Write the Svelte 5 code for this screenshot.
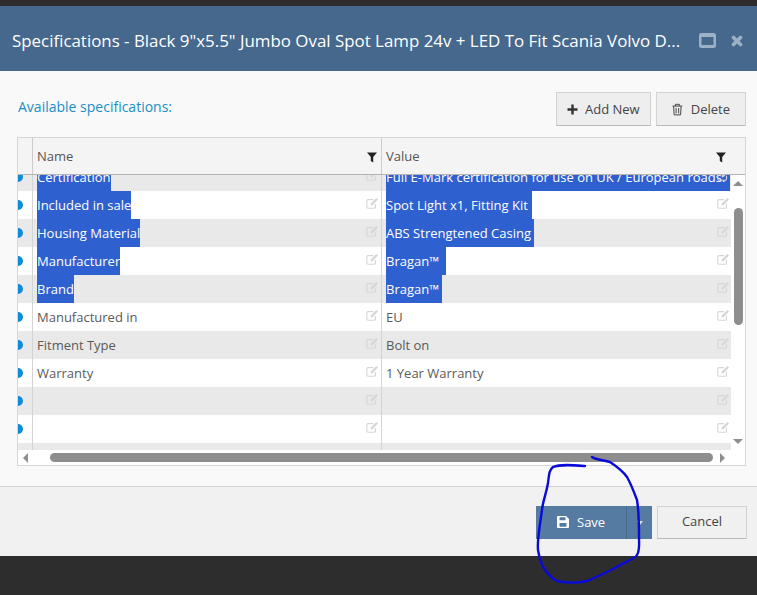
<script>
  const rows = [
    { name: 'Certification', value: 'Full E-Mark certification for use on UK / European roads.', sel: true, pad: 5 },
    { name: 'Included in sale', value: 'Spot Light x1, Fitting Kit', sel: true, pad: 4 },
    { name: 'Housing Material', value: 'ABS Strengtened Casing', sel: true, pad: 3 },
    { name: 'Manufacturer', value: 'Bragan™', sel: true, pad: 7 },
    { name: 'Brand', value: 'Bragan™', sel: true, pad: 3 },
    { name: 'Manufactured in', value: 'EU' },
    { name: 'Fitment Type', value: 'Bolt on' },
    { name: 'Warranty', value: '1 Year Warranty' },
    { name: '', value: '' },
    { name: '', value: '' },
    { name: '', value: '' }
  ];
</script>

{#snippet edit()}
  <svg class="edit" viewBox="0 0 13 12" width="13" height="12" aria-hidden="true">
    <path d="M9.5 6.8V10a1.2 1.2 0 0 1-1.2 1.2H2A1.2 1.2 0 0 1 .8 10V3.8A1.2 1.2 0 0 1 2 2.6h5.2" fill="none" stroke="currentColor" stroke-width="1.1"/>
    <path d="M5 6.2 10.4.9l1.6 1.6-5.3 5.4-2.1.5z" fill="currentColor"/>
  </svg>
{/snippet}

<div class="page">
  <div class="window">
    <header class="titlebar">
      <div class="title">Specifications - Black 9"x5.5" Jumbo Oval Spot Lamp 24v + LED To Fit Scania Volvo D...</div>
      <svg class="maximize" viewBox="0 0 17 15" width="17" height="15" aria-hidden="true">
        <rect x="0" y="0" width="17" height="15" rx="2.5" fill="#9db1c6"/>
        <rect x="2.5" y="4" width="12" height="8" fill="#46688c"/>
      </svg>
      <svg class="close" viewBox="0 0 12 12" width="12" height="12" aria-hidden="true">
        <path d="M2.5 2.5l7 7M9.5 2.5l-7 7" stroke="#9db1c6" stroke-width="3.6" stroke-linecap="round"/>
      </svg>
    </header>

    <main class="content">
      <div class="toolbar">
        <span class="label">Available specifications:</span>
        <div class="actions">
          <button class="btn add">
            <svg viewBox="0 0 11 11" width="11" height="11" aria-hidden="true"><path d="M5.5.5v10M.5 5.5h10" stroke="#333" stroke-width="2.4"/></svg>
            Add New
          </button>
          <button class="btn del">
            <svg viewBox="0 0 11 13" width="11" height="13" aria-hidden="true"><path d="M.5 3h10M3.5 3V1.2h4V3M1.7 3l.5 9h6.6l.5-9M4.2 5v5.5M6.8 5v5.5" fill="none" stroke="#444" stroke-width="1"/></svg>
            Delete
          </button>
        </div>
      </div>

      <div class="grid">
        <div class="grid-head">
          <div class="hc sel"></div>
          <div class="hc name">Name
            <svg class="filter" viewBox="0 0 10 11" width="10" height="11" aria-hidden="true"><path d="M0 .5h10L6.2 5v5.5L3.8 9V5z" fill="#222"/></svg>
          </div>
          <div class="hc value">Value
            <svg class="filter" viewBox="0 0 10 11" width="10" height="11" aria-hidden="true"><path d="M0 .5h10L6.2 5v5.5L3.8 9V5z" fill="#222"/></svg>
          </div>
          <div class="hc end"></div>
        </div>

        <div class="grid-mid">
          <div class="viewport">
            <div class="rows">
              {#each rows as r, i}
                <div class="row" class:alt={i % 2 === 0}>
                  <div class="c-sel"><span class="dot"></span></div>
                  <div class="c c-name">
                    <span class="txt" class:selected={r.sel}>{r.name}</span>
                    {@render edit()}
                  </div>
                  <div class="c c-value">
                    <span class="txt" class:selected={r.sel} style:padding-right={r.pad ? `${r.pad}px` : null}>{r.value}</span>
                    {@render edit()}
                  </div>
                </div>
              {/each}
            </div>
          </div>
          <div class="vscroll">
            <span class="arrow up"></span>
            <div class="vtrack"><div class="vthumb"></div></div>
            <span class="arrow down"></span>
          </div>
        </div>

        <div class="hscroll">
          <span class="arrow left"></span>
          <div class="htrack"><div class="hthumb"></div></div>
          <span class="arrow right"></span>
        </div>
      </div>
    </main>

    <footer class="footer">
      <div class="split">
        <button class="save">
          <svg viewBox="0 0 12 12" width="12" height="12" aria-hidden="true">
            <path fill-rule="evenodd" d="M1 0h8l3 3v8a1 1 0 0 1-1 1H1a1 1 0 0 1-1-1V1a1 1 0 0 1 1-1zm1.5 1.3v3h6v-3zM2.5 7v3.7h7V7z" fill="#fff"/>
          </svg>
          Save
        </button>
        <button class="caret" aria-label="More"><span></span></button>
      </div>
      <button class="btn cancel">Cancel</button>
    </footer>
  </div>

  <svg class="scribble" viewBox="0 0 757 595" width="757" height="595" aria-hidden="true">
    <path d="M585 466C572 465 560 464 553 467C549 470 549 475 548 483C546 495 543 500 542 510C540 525 537 540 538 550C539 558 541 562 543 567C547 573 551 578 557 581C566 583 578 583 587 581C597 577 607 572 617 567C624 562 634 560 637 555C640 550 639 545 639 537C639 525 639 512 637 500C634 492 631 484 627 477C622 470 616 466 610 462C604 460 596 460 592 457" fill="none" stroke="#0a0ad8" stroke-width="2.4" stroke-linecap="round" stroke-linejoin="round"/>
  </svg>
</div>

<style>
  :global(body) { margin: 0; }
  .page {
    position: relative;
    width: 757px;
    height: 595px;
    overflow: hidden;
    background: #2d2d2d;
    padding-top: 6px;
    box-sizing: border-box;
    font-family: "Open Sans", "Liberation Sans", sans-serif;
    font-size: 13px;
    color: #5a5a5a;
  }
  .window { display: flex; flex-direction: column; height: 550px; }
  .titlebar {
    height: 65px;
    flex: none;
    display: flex;
    align-items: center;
    background: #46688c;
    color: #fff;
    padding: 4px 0 0 12px;
    box-sizing: border-box;
  }
  .title { width: 687px; font-size: 16.9px; white-space: nowrap; flex: none; }
  .maximize { margin-right: 15px; flex: none; }
  .close { flex: none; }
  .content {
    flex: 1;
    background: #f9f9f9;
    padding: 21px 11px 0 17px;
    box-sizing: border-box;
    border-bottom: 1px solid #d4d4d4;
  }
  .toolbar {
    display: flex;
    justify-content: space-between;
    height: 45px;
    align-items: flex-start;
  }
  .label { color: #1b8fc4; font-size: 14px; line-height: 20px; margin: 5px 0 0 1px; }
  .actions { display: flex; gap: 5px; }
  .btn {
    height: 34px;
    box-sizing: border-box;
    border: 1px solid #d2d2d2;
    border-bottom-color: #bbb;
    background: #eeeeee;
    font: inherit;
    color: #444;
    display: flex;
    align-items: center;
    gap: 7px;
    padding: 0 10px;
    white-space: nowrap;
  }
  .btn.add { width: 95px; }
  .btn.del { width: 90px; padding: 0 15px; gap: 8px; }
  .grid {
    width: 729px;
    height: 329px;
    box-sizing: border-box;
    border: 1px solid #d6d6d6;
    background: #fff;
    display: flex;
    flex-direction: column;
  }
  .grid-head {
    height: 37px;
    flex: none;
    display: flex;
    background: #f4f4f4;
    border-bottom: 1px solid #b4b4b4;
    box-sizing: border-box;
    color: #555;
  }
  .hc { display: flex; align-items: center; justify-content: space-between; box-sizing: border-box; }
  .hc.sel { width: 14px; background: #f4f4f4; }
  .hc.name { width: 349px; border-left: 1px solid #ccc; padding: 0 4px; }
  .hc.value { width: 350px; border-left: 1px solid #ccc; padding: 0 5px 0 4px; }
  .hc.end { flex: 1; }
  .filter { margin-top: 2px; }
  .grid-mid { flex: 1; min-height: 0; display: flex; }
  .viewport { width: 713px; overflow: hidden; flex: none; }
  .rows { margin-top: -12px; }
  .row { height: 28px; display: flex; background: #fff; }
  .row.alt { background: #e9e9e9; }
  .c-sel { width: 14px; flex: none; overflow: hidden; display: flex; align-items: center; }
  .dot { width: 10px; height: 10px; border-radius: 50%; background: #0d8bd8; margin-left: -5px; flex: none; }
  .c {
    box-sizing: border-box;
    border-left: 1px solid #d4d4d4;
    display: flex;
    padding: 0 3px 0 4px;
    line-height: 28px;
    white-space: nowrap;
    position: relative;
  }
  .c-name { width: 349px; }
  .c-value { width: 350px; }
  .txt { display: block; }
  .selected { background: #2f60cf; color: #fff; }
  .edit { color: #d6d6d6; flex: none; margin-top: 6px; position: absolute; right: 2px; }
  .c-value .edit { right: 1px; }
  .vscroll { flex: 1; display: flex; flex-direction: column; align-items: center; background: #fff; }
  .vtrack { flex: 1; width: 100%; padding-top: 22px; box-sizing: border-box; display: flex; justify-content: center; }
  .vthumb { width: 9px; height: 117px; background: #8e8e8e; border-radius: 5px; }
  .arrow { width: 0; height: 0; display: block; flex: none; }
  .arrow.up { border: 5px solid transparent; border-top: 0; border-bottom: 5px solid #8e8e8e; margin-top: 6px; }
  .arrow.down { border: 5px solid transparent; border-bottom: 0; border-top: 5px solid #8e8e8e; margin-bottom: 6px; }
  .hscroll { height: 15px; flex: none; display: flex; align-items: center; background: #fff; }
  .htrack { flex: 1; padding: 0 0 0 22px; box-sizing: border-box; }
  .hthumb { width: 663px; height: 9px; background: #8e8e8e; border-radius: 5px; }
  .arrow.left { border: 5px solid transparent; border-left: 0; border-right: 5px solid #8e8e8e; margin-left: 5px; }
  .arrow.right { border: 5px solid transparent; border-right: 0; border-left: 5px solid #8e8e8e; margin-right: 20px; }
  .footer {
    height: 69px;
    flex: none;
    background: #f1f1f1;
    box-sizing: border-box;
    padding: 19px 10px 0 536px;
    display: flex;
    gap: 5px;
    align-items: flex-start;
  }
  .split { display: flex; height: 33px; }
  .save {
    width: 90px;
    height: 33px;
    border: 0;
    background: #567ba3;
    color: #fff;
    font: inherit;
    display: flex;
    align-items: center;
    gap: 8px;
    padding: 0 0 2px 21px;
    box-sizing: border-box;
  }
  .caret {
    width: 26px;
    height: 33px;
    border: 0;
    border-left: 1px solid #46688c;
    background: #567ba3;
    padding: 0;
    display: flex;
    align-items: center;
    justify-content: center;
  }
  .caret span { border: 3.5px solid transparent; border-bottom: 0; border-top: 4px solid #d8e2ec; }
  .btn.cancel { width: 90px; height: 33px; justify-content: center; padding: 0 0 3px; background: #f0f0f0; }
  .scribble { position: absolute; left: 0; top: 0; pointer-events: none; }
</style>
